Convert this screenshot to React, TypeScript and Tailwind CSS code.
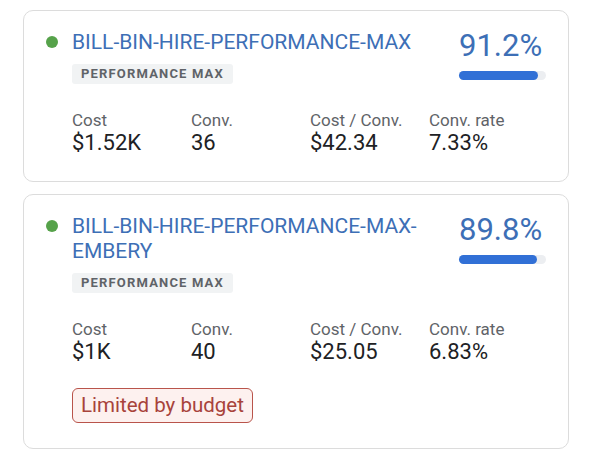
const campaigns = [
  {
    name: "BILL-BIN-HIRE-PERFORMANCE-MAX",
    type: "Performance Max",
    score: 91.2,
    cost: "$1.52K",
    conv: "36",
    costPerConv: "$42.34",
    convRate: "7.33%",
    limited: false,
  },
  {
    name: "BILL-BIN-HIRE-PERFORMANCE-MAX-EMBERY",
    type: "Performance Max",
    score: 89.8,
    cost: "$1K",
    conv: "40",
    costPerConv: "$25.05",
    convRate: "6.83%",
    limited: true,
  },
];

type Campaign = (typeof campaigns)[number];

function Metric({ label, value }: { label: string; value: string }) {
  return (
    <div className="flex flex-col">
      <span className="text-[17px] leading-[20px] text-[#5f6368]">{label}</span>
      <span className="text-[22px] leading-[26px] text-[#202124]">{value}</span>
    </div>
  );
}

function CampaignCard({ c }: { c: Campaign }) {
  return (
    <div className="mx-[23px] flex rounded-[10px] border border-[#dcdcdc] bg-white pt-[19px] pb-[25px] pl-[22px] pr-[22px]">
      <span className="mt-[6px] mr-[14px] h-[12px] w-[12px] shrink-0 rounded-full bg-[#56a24a]" />
      <div className="min-w-0 flex-1">
        <div className="flex items-start justify-between">
          <div className="min-w-0 w-[360px]">
            <p className="text-[21px] leading-[25px] text-[#3d6fb6]">{c.name}</p>
            <span className="mt-[9px] inline-block rounded-[3px] bg-[#f1f3f4] px-[9px] text-[13px] leading-[20px] font-bold uppercase tracking-[0.09em] text-[#5f6368]">
              {c.type}
            </span>
          </div>
          <div className="flex w-[87px] shrink-0 flex-col">
            <span className="text-[31px] leading-[31px] text-[#3d6fb6]">{c.score}%</span>
            <div className="mt-[10px] h-[9px] w-full rounded-full bg-[#eceef1]">
              <div
                className="h-full rounded-full bg-[#3170d6]"
                style={{ width: `${c.score}%` }}
              />
            </div>
          </div>
        </div>
        <div className="mt-[25px] grid grid-cols-[119px_119px_119px_1fr]">
          <Metric label="Cost" value={c.cost} />
          <Metric label="Conv." value={c.conv} />
          <Metric label="Cost / Conv." value={c.costPerConv} />
          <Metric label="Conv. rate" value={c.convRate} />
        </div>
        {c.limited && (
          <div className="mt-[23px] flex">
            <span className="rounded-[6px] border-[1.5px] border-[#b9544b] bg-[#fdf1ef] px-[8px] text-[20.5px] leading-[33px] text-[#a8433b]">
              Limited by budget
            </span>
          </div>
        )}
      </div>
    </div>
  );
}

export default function App() {
  return (
    <div
      className="flex min-h-[455px] flex-col gap-[12px] bg-white pt-[10px]"
      style={{ fontFamily: "Roboto, 'Liberation Sans', sans-serif" }}
    >
      {campaigns.map((c) => (
        <CampaignCard key={c.name} c={c} />
      ))}
    </div>
  );
}
